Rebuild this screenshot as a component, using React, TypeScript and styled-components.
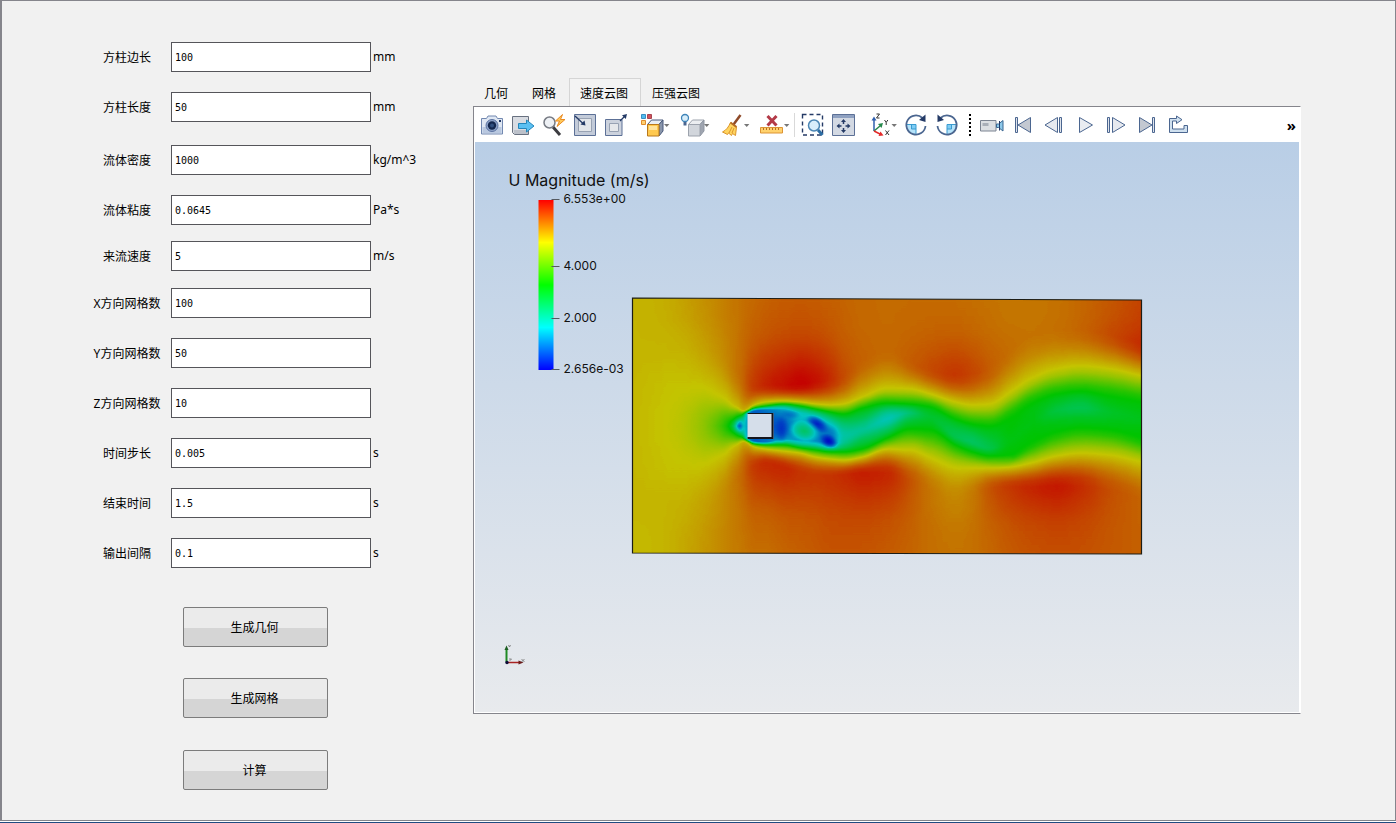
import React from "react";
import styled, { createGlobalStyle } from "styled-components";

const GlobalStyle = createGlobalStyle`
  * { box-sizing: border-box; }
  body {
    margin: 0;
    background: #f1f1f1;
    color: #000;
    font: 12px/16px "Noto Sans", "Noto Sans CJK SC", sans-serif;
  }
`;

const Window = styled.main`
  display: flex;
  min-height: 100vh;
  border-bottom: 1px solid #1f4a80;
  background: #fff;
`;

const Frame = styled.div`
  display: flex;
  flex: 1;
  align-items: flex-start;
  margin-bottom: 1px;
  border: 1px solid #85858c;
  border-left-width: 2px;
  padding: 41px 94px 29px 81px;
  background: #f1f1f1;
`;

const Form = styled.form`
  flex: none;
  width: 390px;
`;

const Row = styled.div<{ $gap: number }>`
  display: flex;
  align-items: center;
  margin-top: ${(p) => p.$gap}px;
`;

const Label = styled.label`
  width: 88px;
  padding-top: 1px;
  text-align: center;
  white-space: nowrap;
`;

const Field = styled.input`
  width: 200px;
  height: 30px;
  margin: 0;
  padding: 0 3px;
  border: 1px solid #55555a;
  border-radius: 0;
  background: #fff;
  color: #000;
  font: 10px/16px "DejaVu Sans Mono", monospace;
`;

const Unit = styled.span`
  padding-left: 2px;
`;

const PushButton = styled.button<{ $gap: number }>`
  display: block;
  width: 145px;
  height: 40px;
  margin: ${(p) => p.$gap}px 0 0 100px;
  padding: 2px 2px 0 0;
  border: 1px solid #7c7c7c;
  border-radius: 2px;
  background: linear-gradient(#ebebeb 0 52%, #d5d5d5 52% 100%);
  color: #000;
  font: inherit;
`;

const Viewer = styled.section`
  flex: 1;
  min-width: 0;
  margin-top: 36px;
`;

const TabBar = styled.div`
  display: flex;
  height: 28px;
`;

const Tab = styled.button<{ $active?: boolean }>`
  padding: 2px 12px 0 10px;
  border: 1px solid ${(p) => (p.$active ? "#d5d5d5" : "transparent")};
  border-bottom: 0;
  background: ${(p) => (p.$active ? "#f3f3f3" : "transparent")};
  color: #000;
  font: inherit;
`;

const Panel = styled.div`
  border: 1px solid #85858c;
  border-right-color: #fff;
  padding: 0 1px 1px;
  background: #fff;
`;

const Toolbar = styled.div`
  display: flex;
  align-items: center;
  height: 35px;
  padding: 0 3px 0 1px;
`;

const Tool = styled.button<{ $wide?: boolean; $before?: number }>`
  flex: none;
  width: ${(p) => (p.$wide ? 40 : 31)}px;
  height: 24px;
  margin: 1px 0 0 ${(p) => p.$before ?? 0}px;
  padding: 0 0 0 4px;
  border: 0;
  background: none;
  text-align: left;
  line-height: 0;
`;

const Separator = styled.span`
  flex: none;
  width: 1px;
  height: 24px;
  margin: 0 1px 0 -2px;
  background: #d9d9d9;
`;

const Grip = styled.span`
  flex: none;
  width: 2px;
  height: 22px;
  margin: 0 5px 0 7px;
  background: repeating-linear-gradient(#000 0 2px, transparent 2px 4px);
`;

const More = styled.button`
  margin-left: auto;
  padding: 0;
  border: 0;
  background: none;
  color: #000;
  font: bold 15px/20px "Noto Sans", sans-serif;
`;

const Scene = styled.svg`
  display: block;
  width: 100%;
  height: 570px;
  background: linear-gradient(#b9cee6, #e8eaed);
`;

/* ---------- toolbar icons ---------- */

const NAVY = "#243a66";
const STEEL = "#4b6690";

const Icon = ({ w = 24, children }: { w?: number; children: React.ReactNode }) => (
  <svg width={w} height="24" viewBox={`0 0 ${w} 24`} fill="none">
    {children}
  </svg>
);

const Caret = ({ x = 24 }: { x?: number }) => <path d={`M${x} 11h5.400l-2.700 3z`} fill="#777" />;

const CameraIcon = () => (
  <Icon>
    <path d="M1.500 5.500h5l1.500-2.500h8l1.500 2.500h5v15.500h-21z" fill="#dfe7f3" stroke="#7288b0" />
    <path d="M2.500 14h19v6h-19z" fill="#b9c8e0" />
    <circle cx="12" cy="12.500" r="6" fill="#8ea3c8" stroke="#5c74a2" />
    <circle cx="12" cy="12.500" r="4.200" fill="#14284f" />
    <circle cx="12" cy="12.500" r="2" fill="#31507f" />
    <path d="M19 7h2v2h-2z" fill={NAVY} />
  </Icon>
);

const ExportIcon = () => (
  <Icon>
    <path d="M1.500 3.500h16v18h-14l-2-2z" fill="#d9dce2" stroke="#687180" />
    <path d="M3 17h14v4h-14z" fill="#bcc1ca" />
    <path d="M7.500 10.500h8v-3.500l7.500 6-7.500 6v-3.500h-8z" fill="#5bc0f2" stroke="#2486bb" />
  </Icon>
);

const FlashSearchIcon = () => (
  <Icon>
    <path d="M11 14l7 8" stroke="#3c3c40" strokeWidth="3" />
    <circle cx="7.500" cy="9.500" r="5.500" fill="#eef1f5" stroke="#777b84" strokeWidth="1.500" />
    <path d="M20.500 1.500l-7 6.500h4l-2.500 5.500 8-7h-4.500z" fill="#ffc95a" stroke="#ea8a21" />
  </Icon>
);

const ShrinkIcon = () => (
  <Icon>
    <path d="M1.500 1.500h21v21h-21z" fill="#c3cbd9" stroke="#5c7096" />
    <path d="M5.500 5.500h13v13h-13z" fill="#e3e6ea" stroke="#98a2b3" />
    <path d="M2 3l8 7.500" stroke={NAVY} strokeWidth="1.300" />
    <path d="M12.500 12.500l-5-1 4-4z" fill={NAVY} />
  </Icon>
);

const GrowIcon = () => (
  <Icon>
    <path d="M1.500 6.500h16.500v16h-16.500z" fill="#ccd2dd" stroke="#5c7096" />
    <path d="M5.500 10.500h9v8h-9z" fill="#e6e8eb" stroke="#98a2b3" />
    <path d="M16 8l5-5" stroke={NAVY} strokeWidth="1.300" />
    <path d="M23 1l-1.200 5-3.800-3.800z" fill={NAVY} />
  </Icon>
);

const ColorCubeIcon = () => (
  <Icon w={33}>
    <path d="M1.500 1.500h4v4h-4z" fill="#53bdf0" stroke="#388fc4" />
    <path d="M7.500 1.500h4v4h-4z" fill="#d0525c" stroke="#a84550" />
    <path d="M1.500 7.500h4v4h-4z" fill="#ffd070" stroke="#df8c2c" />
    <path d="M7.500 11.500l4-4.500h11.500l-4 4.500z" fill="#e9edf3" stroke="#48597a" />
    <path d="M19 11.500l4-4.500v11l-4 5z" fill="#8a96ab" stroke="#48597a" />
    <path d="M7.500 11.500h11.500v11.500h-11.500z" fill="#ffc94f" stroke="#b9781b" />
    <path d="M9 13h8v4h-8z" fill="#ffe39c" />
    <Caret />
  </Icon>
);

const LightCubeIcon = () => (
  <Icon w={33}>
    <path d="M8.500 11.500l4-4.500h11.500l-4 4.500z" fill="#eceef1" stroke="#9da3ad" />
    <path d="M20 11.500l4-4.500v11l-4 5z" fill="#9fa5b0" stroke="#8e95a1" />
    <path d="M8.500 11.500h11.500v11.500h-11.500z" fill="#d2d6dc" stroke="#9da3ad" />
    <circle cx="5" cy="5" r="3.500" fill="#d8eefa" stroke="#3e83b8" strokeWidth="1.300" />
    <path d="M3.500 9h3v3.500h-3z" fill="#4b6690" />
    <Caret />
  </Icon>
);

const BroomIcon = () => (
  <Icon w={33}>
    <path d="M20.500 2l-7 9.500" stroke="#8f4a28" strokeWidth="2.500" />
    <path d="M10.500 9.500l6 4.500-1 8.500-3-2-1 2-3-2.500-1 1.500-5-2.500c4-2 6-5 8-9.500z" fill="#ffd45f" stroke="#dc962b" />
    <path d="M10.500 9.500l6 4.500" stroke="#b66c25" strokeWidth="2" />
    <path d="M12 14l-3 6M14 15l-2 5" stroke="#dc962b" />
    <Caret />
  </Icon>
);

const ClearRulerIcon = () => (
  <Icon w={33}>
    <path d="M7.500 3l9 9.500M16.500 3l-9 9.500" stroke="#b33a48" strokeWidth="3" />
    <path d="M.5 14.500h22v5.500h-22z" fill="#ffd26d" stroke="#dd9435" />
    <path d="M3.500 15v2M6.500 15v2M9.500 15v2M12.500 15v2M15.500 15v2M18.500 15v2" stroke="#b66c25" />
    <Caret />
  </Icon>
);

const ZoomBoxIcon = () => (
  <Icon>
    <path d="M2.500 1.500h20v20.500h-20z" stroke={NAVY} strokeDasharray="4 3" strokeWidth="1.400" />
    <circle cx="14" cy="12.500" r="5.500" fill="#d9eefb" stroke="#4d87b5" strokeWidth="1.500" />
    <path d="M18 17l4.500 5" stroke="#2b6da4" strokeWidth="3" />
  </Icon>
);

const FitIcon = () => (
  <Icon>
    <path d="M1.500 1.500h22v21h-22z" fill="#d3d9e3" stroke="#5c7096" />
    <path d="M2 2h21v3h-21z" fill="#8fa1c1" />
    <path d="M12.500 8v3M12.500 15v3M7 13h3.500M14.500 13h3.500" stroke={NAVY} strokeWidth="1.500" />
    <path d="M12.500 6l2.500 3h-5zM12.500 20l2.500-3h-5zM5.500 13l3-2.500v5zM19.500 13l-3-2.500v5z" fill={NAVY} />
  </Icon>
);

const AxesIcon = () => (
  <Icon w={34}>
    <path d="M10 18v-12" stroke="#2f5fae" strokeWidth="1.500" />
    <path d="M10 3.500l2.500 4h-5z" fill="#2f5fae" />
    <path d="M10 18l6-5" stroke="#26894c" strokeWidth="1.500" />
    <path d="M19 10l-1.500 5-3.500-4z" fill="#26894c" />
    <path d="M10 18l6 3" stroke="#e42a2a" strokeWidth="1.500" />
    <path d="M19.500 22.500l-5 .5 2-4.500z" fill="#e42a2a" />
    <path d="M12.500 1h3l-3 4h3M20.500 7l1.700 2.300 1.700-2.300M22.200 9.300v2.700M21.500 17.500l3.500 4.500M25 17.500l-3.500 4.500" stroke="#333" />
    <Caret x={27.5} />
  </Icon>
);

const RotateIcon = ({ ccw }: { ccw?: boolean }) => (
  <Icon>
    <g transform={ccw ? "matrix(-1 0 0 1 24 0)" : undefined}>
      <path d="M12 11.500h-9.500c.5 5.500 4 9.500 9.500 10z" fill="#b5e3fa" />
      <path d="M7.500 11.500h4.500v4.500h-4.500z" fill="#7fcdf4" />
      <path d="M2.500 11.500h9.500v9.500M7.500 11.500v4.500h4.500" stroke="#3a9bd0" />
      <path d="M18.500 5a9.600 9.600 0 1 0 3 8" stroke={STEEL} strokeWidth="1.800" />
      <path d="M21.500 1.500v7.500l-6.500-2z" fill={NAVY} />
    </g>
  </Icon>
);

const VideoIcon = () => (
  <Icon>
    <path d="M.5 7.500h15.500v10.500h-15.500z" fill="#dcdfe3" stroke="#7c8492" />
    <path d="M2.500 10h6v3h-6z" fill="#a9afb8" />
    <path d="M16.500 11h2l4.500-3.500v10.500l-4.500-3.500h-2z" fill="#8ec9ea" stroke="#3b6792" />
    <path d="M19.500 8v9.500" stroke={NAVY} />
  </Icon>
);

const FirstIcon = () => (
  <Icon>
    <path d="M4.500 4.500h2v15h-2z" fill="#dfe4ec" stroke={STEEL} />
    <path d="M19.500 4.500v15l-12.500-7.500z" fill="#c3c8d1" stroke={STEEL} />
  </Icon>
);

const PrevIcon = () => (
  <Icon>
    <path d="M15.500 4.500v15l-12.500-7.500z" fill="#e6e9ef" stroke={STEEL} />
    <path d="M17.500 4.500h2v15h-2z" fill="#dfe4ec" stroke={STEEL} />
  </Icon>
);

const PlayIcon = () => (
  <Icon>
    <path d="M6.500 4.500v15l13-7.500z" fill="#e9ecf1" stroke={STEEL} />
  </Icon>
);

const NextIcon = () => (
  <Icon>
    <path d="M3.500 4.500h2v15h-2z" fill="#dfe4ec" stroke={STEEL} />
    <path d="M8.500 4.500v15l12.500-7.500z" fill="#e6e9ef" stroke={STEEL} />
  </Icon>
);

const LastIcon = () => (
  <Icon>
    <path d="M4.500 4.500v15l12.500-7.500z" fill="#c3c8d1" stroke={STEEL} />
    <path d="M17.500 4.500h2v15h-2z" fill="#dfe4ec" stroke={STEEL} />
  </Icon>
);

const LoopIcon = () => (
  <Icon>
    <path
      d="M3.500 5.500h7v-2.500l5.500 3.700-5.500 3.800v-2.500h-4v8h11.500v-3.500h3.500v7h-18z"
      fill="#cfe0ef"
      stroke={STEEL}
      strokeLinejoin="round"
    />
  </Icon>
);

/* ---------- velocity field ---------- */

/*
 * One station per row: x, then (y, value) knots from the top wall to the bottom wall.
 * Values are |U| / max|U|.
 */
const mirror = (x: number, wall: number, ...k: number[]) => {
  const out = [x, 299, wall];
  for (let i = 0; i < 8; i += 2) out.push(k[i], k[i + 1]);
  out.push(426, k[8]);
  for (let i = 6; i >= 0; i -= 2) out.push(852 - k[i], k[i + 1]);
  out.push(553, wall - 0.008);
  return out;
};

const STATIONS: number[][] = [
  mirror(631, 0.77, 350, 0.77, 385, 0.768, 400, 0.767, 414, 0.766, 0.766),
  mirror(660, 0.777, 345, 0.77, 385, 0.757, 400, 0.755, 414, 0.752, 0.752),
  mirror(680, 0.792, 345, 0.775, 385, 0.752, 402, 0.744, 414, 0.738, 0.735),
  mirror(700, 0.812, 350, 0.79, 387, 0.75, 402, 0.722, 414, 0.7, 0.69),
  mirror(715, 0.828, 355, 0.807, 394, 0.748, 406, 0.7, 416, 0.65, 0.62),
  mirror(725, 0.84, 360, 0.825, 399, 0.75, 409, 0.67, 417, 0.59, 0.54),
  mirror(732, 0.848, 368, 0.842, 404, 0.76, 411, 0.66, 418, 0.54, 0.43),
  mirror(736, 0.852, 372, 0.852, 406, 0.765, 412, 0.63, 419, 0.45, 0.25),
  mirror(739, 0.855, 375, 0.86, 408, 0.77, 413, 0.6, 419, 0.37, 0.05),
  mirror(742, 0.858, 379, 0.87, 410, 0.785, 413, 0.62, 418, 0.36, 0.26),
  mirror(747, 0.862, 384, 0.9, 409, 0.78, 411, 0.55, 413, 0.2, 0.2),
  mirror(753, 0.867, 386, 0.925, 405, 0.76, 408, 0.5, 411, 0.12, 0.1),
  [765, 299, 0.875, 385, 0.955, 402, 0.75, 406, 0.5, 410, 0.15, 426, 0.1, 442, 0.15, 445, 0.5, 449, 0.75, 463, 0.945, 553, 0.86],
  [783, 299, 0.882, 385, 0.98, 401, 0.75, 404, 0.5, 410, 0.2, 427, 0.12, 439, 0.2, 445, 0.5, 451, 0.75, 467, 0.95, 553, 0.872],
  [800, 299, 0.884, 384, 0.998, 402, 0.75, 406, 0.5, 413, 0.26, 427, 0.22, 440, 0.2, 448, 0.5, 453, 0.75, 472, 0.935, 553, 0.88],
  [815, 299, 0.882, 382, 0.98, 404, 0.75, 409, 0.5, 415, 0.29, 426, 0.15, 441, 0.18, 450, 0.5, 457, 0.75, 475, 0.93, 553, 0.887],
  [830, 299, 0.878, 380, 0.945, 405, 0.75, 412, 0.5, 420, 0.32, 433, 0.15, 443, 0.14, 452, 0.5, 459, 0.75, 476, 0.935, 553, 0.895],
  [843, 299, 0.873, 377, 0.905, 404, 0.75, 414, 0.5, 424, 0.36, 436, 0.29, 443, 0.32, 452, 0.5, 460, 0.75, 475, 0.945, 553, 0.895],
  [862, 299, 0.866, 360, 0.875, 397, 0.75, 408, 0.5, 418, 0.4, 430, 0.31, 438, 0.38, 449, 0.5, 457, 0.75, 473, 0.96, 553, 0.893],
  [887, 299, 0.864, 350, 0.866, 388, 0.75, 403, 0.5, 411, 0.34, 419, 0.27, 428, 0.36, 438, 0.5, 449, 0.75, 473, 0.95, 553, 0.885],
  [910, 299, 0.864, 362, 0.882, 389, 0.75, 404, 0.5, 408, 0.42, 413, 0.36, 420, 0.42, 429, 0.5, 449, 0.74, 480, 0.895, 553, 0.873],
  [930, 299, 0.864, 370, 0.905, 394, 0.75, 407, 0.5, 412, 0.46, 417, 0.44, 423, 0.46, 430, 0.5, 456, 0.74, 487, 0.85, 553, 0.86],
  [955, 299, 0.862, 375, 0.928, 402, 0.75, 419, 0.5, 427, 0.43, 436, 0.4, 440, 0.43, 445, 0.5, 466, 0.74, 495, 0.825, 553, 0.853],
  [972, 299, 0.858, 374, 0.912, 405, 0.75, 424, 0.5, 433, 0.42, 442, 0.38, 447, 0.43, 452, 0.5, 468, 0.75, 492, 0.845, 553, 0.858],
  [990, 299, 0.854, 368, 0.882, 404, 0.75, 426, 0.5, 438, 0.44, 448, 0.41, 452, 0.45, 456, 0.5, 468, 0.75, 488, 0.895, 553, 0.87],
  [1010, 299, 0.85, 350, 0.86, 392, 0.75, 418, 0.5, 430, 0.49, 440, 0.48, 448, 0.49, 455, 0.5, 467, 0.75, 487, 0.93, 553, 0.886],
  [1030, 299, 0.85, 335, 0.853, 379, 0.75, 404, 0.5, 414, 0.48, 423, 0.48, 433, 0.49, 443, 0.5, 463, 0.75, 487, 0.952, 553, 0.895],
  [1056, 299, 0.855, 330, 0.858, 369, 0.75, 394, 0.5, 403, 0.45, 411, 0.42, 422, 0.47, 432, 0.5, 456, 0.75, 486, 0.967, 553, 0.9],
  [1080, 299, 0.868, 330, 0.872, 366, 0.75, 391, 0.5, 399, 0.44, 408, 0.4, 417, 0.45, 428, 0.5, 453, 0.75, 486, 0.945, 553, 0.898],
  [1110, 299, 0.89, 335, 0.905, 369, 0.75, 396, 0.5, 405, 0.47, 412, 0.45, 421, 0.47, 430, 0.5, 455, 0.75, 490, 0.9, 553, 0.888],
  [1142, 299, 0.915, 345, 0.945, 376, 0.75, 402, 0.5, 411, 0.48, 420, 0.47, 429, 0.49, 438, 0.5, 462, 0.75, 500, 0.872, 553, 0.876],
];

/* Monotone cubic interpolation through (xs, ys). */
function spline(xs: number[], ys: number[]) {
  const n = xs.length;
  const d: number[] = [];
  for (let i = 0; i < n - 1; i++) d.push((ys[i + 1] - ys[i]) / (xs[i + 1] - xs[i]));
  const m = ys.map((_, i) => {
    if (i === 0) return d[0];
    if (i === n - 1) return d[n - 2];
    return d[i - 1] * d[i] <= 0 ? 0 : (2 * d[i - 1] * d[i]) / (d[i - 1] + d[i]);
  });
  return (x: number) => {
    let i = 0;
    while (i < n - 2 && x > xs[i + 1]) i++;
    const h = xs[i + 1] - xs[i];
    const t = (x - xs[i]) / h;
    const t2 = t * t;
    const t3 = t2 * t;
    return (
      (2 * t3 - 3 * t2 + 1) * ys[i] +
      (t3 - 2 * t2 + t) * h * m[i] +
      (3 * t2 - 2 * t3) * ys[i + 1] +
      (t3 - t2) * h * m[i + 1]
    );
  };
}

const STEP = 3;
const knotCurves = STATIONS[0].slice(1).map((_, k) =>
  spline(
    STATIONS.map((s) => s[0]),
    STATIONS.map((s) => s[k + 1])
  )
);

const grey = (v: number) => {
  const g = Math.round(Math.min(1, Math.max(0, v)) * 255);
  return `rgb(${g},${g},${g})`;
};

/* The excess over the wall value decays quickly away from each peak. */
const decay = (ys: number[], vs: number[], wall: number, peak: number) => {
  const mid = (f: number, a: number[], g: number) => a[peak] + (a[wall] - a[peak]) * (g || f);
  const near = [mid(0.3, ys, 0), mid(0.3, vs, 0.4)];
  const far = [mid(0.6, ys, 0), mid(0.6, vs, 0.8)];
  return wall < peak ? [far, near] : [near, far];
};

const columns = Array.from({ length: 171 }, (_, i) => {
  const x = 630 + i * STEP;
  const k = knotCurves.map((c) => c(x + STEP / 2));
  const ys = k.filter((_, j) => j % 2 === 0);
  const vs = k.filter((_, j) => j % 2 === 1);
  const last = ys.length - 1;
  const top = decay(ys, vs, 0, 1);
  const bottom = decay(ys, vs, last, last - 1);
  ys.splice(last, 0, bottom[0][0], bottom[1][0]);
  vs.splice(last, 0, bottom[0][1], bottom[1][1]);
  ys.splice(1, 0, top[0][0], top[1][0]);
  vs.splice(1, 0, top[0][1], top[1][1]);
  const f = spline(ys, vs);
  const stops: { at: number; color: string }[] = [];
  for (let j = 0; j < ys.length - 1; j++) {
    const parts = ys[j + 1] - ys[j] > 12 ? 4 : 2;
    for (let p = 0; p < parts; p++) {
      const y = ys[j] + ((ys[j + 1] - ys[j]) * p) / parts;
      stops.push({ at: (y - 299) / 254, color: grey(f(y)) });
    }
  }
  stops.push({ at: 1, color: grey(vs[vs.length - 1]) });
  return { x, stops };
});

/* Recirculation cells behind the cylinder: cx, cy, rx, ry, tilt, value */
const CELLS = [
  [781, 429, 7, 15, 0, 0.06],
  [788, 415, 12, 5, 0, 0.14],
  [817, 424, 13, 7, 35, 0.03],
  [828, 441, 10, 7, 30, 0],
  [804, 431, 16, 11, 15, 0.38],
];

const DOMAIN = "632,298 1141,300 1141,554 632,553";

const VelocityField = () => (
  <>
    <defs>
      <filter id="rainbow" x="0" y="0" width="1" height="1" colorInterpolationFilters="sRGB">
        <feGaussianBlur stdDeviation="1.8 0.7" />
        <feComponentTransfer>
          <feFuncR type="table" tableValues="0 0 0 .77 .77" />
          <feFuncG type="table" tableValues="0 .77 .77 .77 0" />
          <feFuncB type="table" tableValues=".77 .77 0 0 0" />
        </feComponentTransfer>
      </filter>
      <clipPath id="domain">
        <polygon points={DOMAIN} />
      </clipPath>
      {columns.map((c) => (
        <linearGradient key={c.x} id={`c${c.x}`} gradientUnits="userSpaceOnUse" x1="0" x2="0" y1="299" y2="553">
          {c.stops.map((s, i) => (
            <stop key={i} offset={s.at} stopColor={s.color} />
          ))}
        </linearGradient>
      ))}
      {CELLS.map((c, i) => (
        <radialGradient key={i} id={`cell${i}`}>
          <stop offset="0" stopColor={grey(c[5])} />
          <stop offset=".4" stopColor={grey(c[5])} stopOpacity=".7" />
          <stop offset="1" stopColor={grey(c[5])} stopOpacity="0" />
        </radialGradient>
      ))}
    </defs>
    <g clipPath="url(#domain)">
      <g filter="url(#rainbow)">
        {columns.map((c) => (
          <rect key={c.x} x={c.x} y="290" width={STEP + 1} height="272" fill={`url(#c${c.x})`} />
        ))}
        {CELLS.map(([cx, cy, rx, ry, tilt], i) => (
          <ellipse key={i} cx={cx} cy={cy} rx={rx} ry={ry} transform={`rotate(${tilt} ${cx} ${cy})`} fill={`url(#cell${i})`} />
        ))}
      </g>
    </g>
    <polygon points={DOMAIN} fill="none" stroke="#1c1c14" strokeWidth="1.200" />
    <path d="M747 413h26v26h-26z" fill="#d5deea" />
    <path d="M747 413.500h25" fill="none" stroke="#15151c" />
    <path d="M772 413v25h-25" fill="none" stroke="#15151c" strokeWidth="2" />
  </>
);

const TICKS = [
  { y: 199, text: "6.553e+00" },
  { y: 266, text: "4.000" },
  { y: 318, text: "2.000" },
  { y: 369, text: "2.656e-03" },
];

const Legend = () => (
  <g fill="#111" fontFamily="Lato, sans-serif">
    <defs>
      <linearGradient id="scale" x1="0" x2="0" y1="0" y2="1">
        <stop offset="0" stopColor="#f00" />
        <stop offset=".25" stopColor="#ff0" />
        <stop offset=".5" stopColor="#0f0" />
        <stop offset=".75" stopColor="#0ff" />
        <stop offset="1" stopColor="#00f" />
      </linearGradient>
    </defs>
    <text x="508" y="186" fontFamily="Inter, sans-serif" fontSize="16">
      U Magnitude (m/s)
    </text>
    <rect x="538" y="200" width="15" height="170" fill="url(#scale)" />
    {TICKS.map((t) => (
      <g key={t.y}>
        <path d={`M551 ${t.y}.500h8`} stroke="#555a60" />
        <text x="563" y={t.y + 4} fontFamily="Inter, sans-serif" fontSize="12">
          {t.text}
        </text>
      </g>
    ))}
  </g>
);

const Triad = () => (
  <g>
    <path d="M506 662v-13" stroke="#1f8a24" strokeWidth="2" />
    <path d="M506 645.500l2 4.500h-4z" fill="#1b5e20" />
    <path d="M506 662.500h13" stroke="#a82222" strokeWidth="1.500" />
    <path d="M523 662.500l-5 2v-4z" fill="#6b1c1c" />
    <circle cx="506.500" cy="662.500" r="1.700" fill="#0d0d3a" />
    <path d="M508 645l1 2 1-2M521 659l3 3M524 659l-3 3M508.500 659h2.500l-2 2" stroke="#666" strokeWidth=".7" fill="none" />
  </g>
);

/* ---------- page ---------- */

const FIELDS = [
  { id: "side", label: "方柱边长", value: "100", unit: "mm", gap: 0 },
  { id: "length", label: "方柱长度", value: "50", unit: "mm", gap: 20 },
  { id: "density", label: "流体密度", value: "1000", unit: "kg/m^3", gap: 23 },
  { id: "viscosity", label: "流体粘度", value: "0.0645", unit: "Pa*s", gap: 20 },
  { id: "inlet", label: "来流速度", value: "5", unit: "m/s", gap: 16 },
  { id: "nx", label: "X方向网格数", value: "100", unit: "", gap: 17 },
  { id: "ny", label: "Y方向网格数", value: "50", unit: "", gap: 20 },
  { id: "nz", label: "Z方向网格数", value: "10", unit: "", gap: 20 },
  { id: "dt", label: "时间步长", value: "0.005", unit: "s", gap: 20 },
  { id: "end", label: "结束时间", value: "1.5", unit: "s", gap: 20 },
  { id: "output", label: "输出间隔", value: "0.1", unit: "s", gap: 20 },
];

export default function App() {
  return (
    <Window>
      <GlobalStyle />
      <Frame>
        <Form>
          {FIELDS.map((f) => (
            <Row key={f.id} $gap={f.gap}>
              <Label htmlFor={f.id}>{f.label}</Label>
              <Field id={f.id} defaultValue={f.value} />
              {f.unit && <Unit>{f.unit}</Unit>}
            </Row>
          ))}
          <PushButton type="button" $gap={39}>生成几何</PushButton>
          <PushButton type="button" $gap={31}>生成网格</PushButton>
          <PushButton type="button" $gap={32}>计算</PushButton>
        </Form>
        <Viewer>
          <TabBar role="tablist">
            <Tab role="tab">几何</Tab>
            <Tab role="tab">网格</Tab>
            <Tab role="tab" aria-selected $active>速度云图</Tab>
            <Tab role="tab">压强云图</Tab>
          </TabBar>
          <Panel>
            <Toolbar role="toolbar">
              <Tool aria-label="截图"><CameraIcon /></Tool>
              <Tool aria-label="导出"><ExportIcon /></Tool>
              <Tool aria-label="快速缩放"><FlashSearchIcon /></Tool>
              <Tool aria-label="缩小视图"><ShrinkIcon /></Tool>
              <Tool aria-label="放大视图"><GrowIcon /></Tool>
              <Tool aria-label="着色" $wide $before={5}><ColorCubeIcon /></Tool>
              <Tool aria-label="光照" $wide><LightCubeIcon /></Tool>
              <Tool aria-label="清理" $wide><BroomIcon /></Tool>
              <Tool aria-label="清除标尺" $wide><ClearRulerIcon /></Tool>
              <Separator />
              <Tool aria-label="框选缩放"><ZoomBoxIcon /></Tool>
              <Tool aria-label="适应窗口"><FitIcon /></Tool>
              <Tool aria-label="坐标轴视角" $wide $before={2}><AxesIcon /></Tool>
              <Tool aria-label="顺时针旋转"><RotateIcon /></Tool>
              <Tool aria-label="逆时针旋转"><RotateIcon ccw /></Tool>
              <Grip />
              <Tool aria-label="录像"><VideoIcon /></Tool>
              <Tool aria-label="第一帧"><FirstIcon /></Tool>
              <Tool aria-label="上一帧"><PrevIcon /></Tool>
              <Tool aria-label="播放"><PlayIcon /></Tool>
              <Tool aria-label="下一帧"><NextIcon /></Tool>
              <Tool aria-label="最后一帧"><LastIcon /></Tool>
              <Tool aria-label="循环"><LoopIcon /></Tool>
              <More aria-label="更多">»</More>
            </Toolbar>
            <Scene viewBox="475 142 823 570" preserveAspectRatio="xMidYMid meet">
              <VelocityField />
              <Legend />
              <Triad />
            </Scene>
          </Panel>
        </Viewer>
      </Frame>
    </Window>
  );
}
